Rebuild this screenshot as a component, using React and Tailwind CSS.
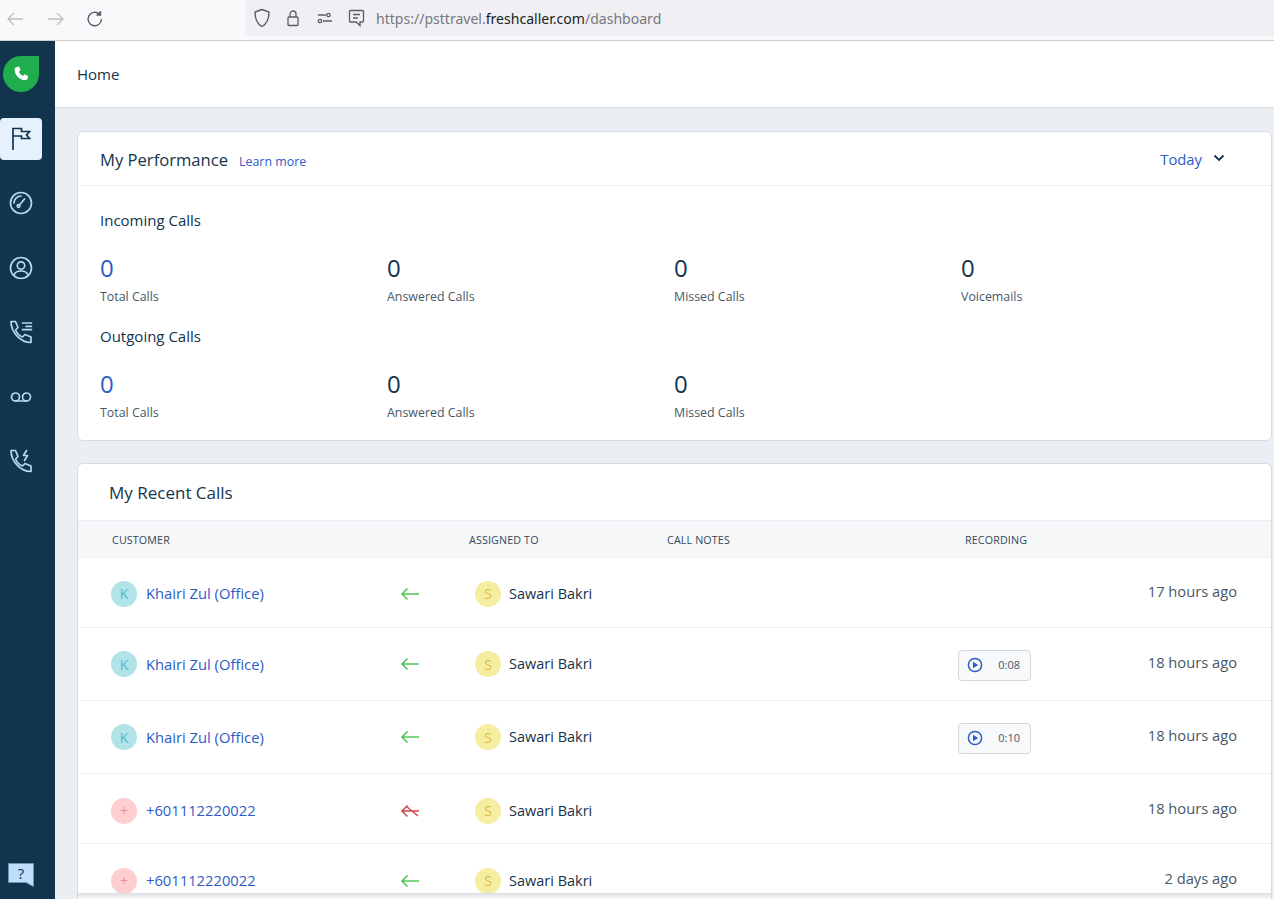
import React from "react";

const Arrow = ({ missed }) =>
  missed ? (
    <svg width="20" height="14" viewBox="0 0 20 14" fill="none" stroke="#d0484f" strokeWidth="1.5">
      <path d="M19 7H2M7.5 1.5 2 7l5.5 5.5M6 2l12 10" />
    </svg>
  ) : (
    <svg width="20" height="14" viewBox="0 0 20 14" fill="none" stroke="#57c35a" strokeWidth="1.6">
      <path d="M19 7H2M7.5 1.5 2 7l5.5 5.5" />
    </svg>
  );

const Play = () => (
  <svg width="16" height="16" viewBox="0 0 16 16" fill="none">
    <circle cx="8" cy="8" r="6.6" stroke="#2c5cc5" strokeWidth="1.5" />
    <path d="M6 4.8v6.4L11.2 8z" fill="#2c5cc5" />
  </svg>
);

const Stat = ({ value, label, blue }) => (
  <div>
    <div className={`text-[24px] leading-[32px] ${blue ? "text-[#2c5cc5]" : "text-[#12344d]"}`}>{value}</div>
    <div className="mt-[4px] text-[12.4px] leading-[18px] text-[#475867]">{label}</div>
  </div>
);

const rows = [
  { name: "Khairi Zul (Office)", letter: "K", h: "h-[70px] pt-[2px]", time: "17 hours ago" },
  { name: "Khairi Zul (Office)", letter: "K", h: "h-[73px]", time: "18 hours ago", rec: "0:08" },
  { name: "Khairi Zul (Office)", letter: "K", h: "h-[73px]", time: "18 hours ago", rec: "0:10" },
  { name: "+601112220022", letter: "+", h: "h-[70px] pt-[4px]", time: "18 hours ago", missed: true },
  { name: "+601112220022", letter: "+", h: "h-[70px] pt-[4px]", time: "2 days ago" },
];

const avatarColor = {
  K: "bg-[#b1e4e9] text-[#5cb8c4]",
  "+": "bg-[#ffcfcf] text-[#ef8f8f]",
};

const NavIcon = ({ children, active }) => (
  <div className={`flex h-[42px] w-[42px] items-center justify-center rounded-[4px] ${active ? "bg-[#e5f2fd]" : ""}`}>
    {children}
  </div>
);

const stroke = { fill: "none", stroke: "#b5d9f3", strokeWidth: 1.7, strokeLinecap: "round", strokeLinejoin: "round" };
const phone = "M2 1.500h4.500l2.500 6-2.500 2.500c1.500 3.500 3.500 5.500 7 7l2.500-2.500 6 2.500v5.500C11 22.500 2 12 2 1.500z";

export default function App() {
  return (
    <div className="flex h-[899px] flex-col overflow-hidden bg-[#ebeff3] font-['Open_Sans',sans-serif] text-[#12344d]">
      {/* browser bar */}
      <div className="flex h-[41px] shrink-0 items-start border-b border-[#cfcfd1] bg-[#f9f9fb]">
        <div className="flex h-[38px] w-[245px] shrink-0 items-center gap-[21px] pl-[6px]">
          <svg width="19" height="16" viewBox="0 0 19 16" fill="none" stroke="#bdbdc1" strokeWidth="1.3"><path d="M17 8H2M8 2 2 8l6 6" /></svg>
          <svg width="19" height="16" viewBox="0 0 19 16" fill="none" stroke="#bdbdc1" strokeWidth="1.3"><path d="M2 8h15M11 2l6 6-6 6" /></svg>
          <svg className="-ml-[1px]" width="20" height="20" viewBox="0 0 20 20" fill="none" stroke="#5b5b66" strokeWidth="1.4"><path d="M16.5 10a6.7 6.7 0 1 1-2.2-5" /><path d="M15.5 2v4h-4" fill="#5b5b66" /></svg>
        </div>
        <div className="flex h-[36px] flex-1 items-center rounded-l-[5px] bg-[#f0f0f4] pl-[8px]">
          <svg width="18" height="20" viewBox="0 0 18 20" fill="none" stroke="#5b5b66" strokeWidth="1.4"><path d="M9 1.5 2 4c0 7 1.5 11.500 7 14.500C14.500 15.500 16 11 16 4z" /></svg>
          <svg className="ml-[15px]" width="14" height="18" viewBox="0 0 14 18" fill="none" stroke="#5b5b66" strokeWidth="1.3"><rect x="2" y="8" width="10" height="8.500" rx="1" /><path d="M4 8V5a3 3 0 0 1 6 0v3" /></svg>
          <svg className="ml-[17px]" width="16" height="12" viewBox="0 0 16 12" fill="none" stroke="#5b5b66" strokeWidth="1.3"><circle cx="11.500" cy="3" r="1.700" /><circle cx="3" cy="9" r="1.700" /><path d="M1 3h8M6 9h9" /></svg>
          <svg className="ml-[15px]" width="17" height="18" viewBox="0 0 17 18" fill="none" stroke="#5b5b66" strokeWidth="1.3"><path d="M2.500 1.500h12a1 1 0 0 1 1 1V12a1 1 0 0 1-1 1H12v3.500L8 13H2.500a1 1 0 0 1-1-1V2.500a1 1 0 0 1 1-1zM5 5.500h7M5 9h5" /></svg>
          <div className="ml-[11px] mt-[2px] font-['Noto_Sans',sans-serif] text-[14.05px] text-[#78787f]">
            https://psttravel.<span className="text-[#1d1d22]">freshcaller.com</span>/dashboard
          </div>
        </div>
      </div>

      <div className="flex min-h-0 flex-1">
        {/* sidebar */}
        <aside className="flex w-[55px] shrink-0 flex-col items-center bg-[#12344d] pb-[12px]">
          <div className="mt-[15px] mr-[12px] ml-[-1px] flex h-[36px] w-[36px] items-center justify-center rounded-full rounded-tr-[8px] bg-[#1fad4e]">
            <svg width="18" height="18" viewBox="0 0 24 24" fill="#fff"><path d="M6.600 2.500 9.500 2l2 5-2.200 2c.8 2.500 2.500 4.300 5.200 5.500l2-2.200 5 2.200-.5 3c-.3 1.500-1.500 2.500-3 2.500C10 20 3.500 13.500 3.500 5.500c0-1.500 1.500-2.700 3.100-3z" /></svg>
          </div>
          <div className="mt-[26px] flex w-full flex-col">
            <NavIcon active>
              <svg width="22" height="24" viewBox="0 0 22 24" fill="none" stroke="#12344d" strokeWidth="1.700"><path d="M3 23V1.500h8.500V4.500h8L16.500 8l3 3.500H11.500V9H3" /></svg>
            </NavIcon>
            <div className="mt-[22px] flex flex-col gap-[22.5px]">
              <NavIcon>
                <svg width="24" height="24" viewBox="0 0 24 24" {...stroke}><circle cx="12" cy="12" r="10.500" /><circle cx="9.500" cy="15" r="1.300" /><path d="m10.500 14 5-6M5 12a7 7 0 0 1 7-7" /></svg>
              </NavIcon>
              <NavIcon>
                <svg width="24" height="24" viewBox="0 0 24 24" {...stroke}><circle cx="12" cy="12" r="10.500" /><circle cx="12" cy="9.500" r="3.700" /><path d="M5 19c1-3 3.500-4 7-4s6 1 7 4" /></svg>
              </NavIcon>
              <NavIcon>
                <svg width="24" height="24" viewBox="0 0 24 24" {...stroke}><path d={phone} /><path d="M13.500 3h9M17 6.300h5.500M13.500 9.600h9" /></svg>
              </NavIcon>
              <NavIcon>
                <svg width="22" height="12" viewBox="0 0 22 12" {...stroke}><circle cx="5.500" cy="6" r="4" /><circle cx="16.500" cy="6" r="4" /><path d="M5.500 10h11" /></svg>
              </NavIcon>
              <NavIcon>
                <svg width="24" height="24" viewBox="0 0 24 24" {...stroke}><path d={phone} /><path d="M17.500 1.500l-3 5h4l-3 5" /></svg>
              </NavIcon>
            </div>
          </div>
          <div className="relative mt-auto mr-[13px] h-[24px] w-[26px]">
            <svg width="26" height="24" viewBox="0 0 26 24">
              <path d="M.5.500h25v23l-7.500-4H.5z" fill="#bfdffc" stroke="#6f93b3" />
            </svg>
            <span className="absolute inset-x-0 top-0 text-center text-[15px] leading-[20px] text-[#12344d]">?</span>
          </div>
        </aside>

        <main className="flex min-w-0 flex-1 flex-col">
          <header className="flex h-[67px] shrink-0 items-center border-b border-[#dadfe3] bg-white pl-[22px] text-[15px]">
            Home
          </header>

          <div className="flex min-h-0 flex-1 flex-col overflow-hidden pl-[22px] pr-[2px] pt-[23px]">
            {/* performance */}
            <section className="h-[310px] shrink-0 rounded-[6px] border border-[#d6dce3] bg-white">
              <div className="flex h-[54px] items-center border-b border-[#ebeff3] pl-[22px] pr-[46px] pt-[3px]">
                <h2 className="text-[16.6px]">My Performance</h2>
                <a className="ml-[11px] mt-[5px] text-[12.4px] text-[#2c5cc5]">Learn more</a>
                <div className="ml-auto -mt-[2px] flex items-center gap-[11px] text-[14.8px] text-[#2c5cc5]">
                  Today
                  <svg className="-mt-[2px]" width="12" height="8" viewBox="0 0 12 8" fill="none" stroke="#12344d" strokeWidth="1.800"><path d="m1.500 1.500 4.500 4.500 4.500-4.500" /></svg>
                </div>
              </div>
              <div className="pl-[22px] pt-[23px]">
                <h3 className="text-[15px] leading-[22px]">Incoming Calls</h3>
                <div className="mt-[21px] grid grid-cols-[287px_287px_287px_287px]">
                  <Stat value="0" label="Total Calls" blue />
                  <Stat value="0" label="Answered Calls" />
                  <Stat value="0" label="Missed Calls" />
                  <Stat value="0" label="Voicemails" />
                </div>
                <h3 className="mt-[19px] text-[15px] leading-[22px]">Outgoing Calls</h3>
                <div className="mt-[21px] grid grid-cols-[287px_287px_287px_287px]">
                  <Stat value="0" label="Total Calls" blue />
                  <Stat value="0" label="Answered Calls" />
                  <Stat value="0" label="Missed Calls" />
                </div>
              </div>
            </section>

            {/* recent calls */}
            <section className="relative mt-[22px] min-h-0 flex-1 overflow-hidden rounded-t-[6px] border border-b-0 border-[#d6dce3] bg-white">
              <div className="flex h-[56px] items-center pl-[31px] pt-[2px] text-[17px]">My Recent Calls</div>
              <div className="grid h-[38px] grid-cols-[357px_198px_298px_1fr] items-center border-y border-[#ebeff3] bg-[#f5f7f9] pl-[34px] pt-[2px] text-[10.7px] tracking-[0.15px] text-[#32485a]">
                <div>CUSTOMER</div>
                <div>ASSIGNED TO</div>
                <div>CALL NOTES</div>
                <div>RECORDING</div>
              </div>
              {rows.map((row, i) => (
                <div key={i} className={`flex shrink-0 items-center border-b border-[#ebeff3] pl-[33px] pr-[34px] ${row.h}`}>
                  <div className={`flex h-[26px] w-[26px] shrink-0 items-center justify-center rounded-full text-[14px] ${avatarColor[row.letter]}`}>
                    {row.letter}
                  </div>
                  <a className="ml-[9px] w-[254px] shrink-0 text-[14.75px] text-[#2c5cc5]">{row.name}</a>
                  <div className="w-[75px] shrink-0"><Arrow missed={row.missed} /></div>
                  <div className="flex h-[26px] w-[26px] shrink-0 items-center justify-center rounded-full bg-[#f5eea0] text-[14px] text-[#dcbc3e]">S</div>
                  <div className="ml-[8px] w-[449px] shrink-0 text-[14.5px] text-[#183247]">Sawari Bakri</div>
                  <div className="w-[73px] shrink-0">
                    {row.rec && (
                      <div className="mt-[2px] flex h-[31px] w-[73px] items-center justify-between rounded-[4px] border border-[#cfd7df] bg-[#f7f9fa] pl-[8px] pr-[10px] text-[11px] text-[#475867]">
                        <Play />
                        {row.rec}
                      </div>
                    )}
                  </div>
                  <div className="ml-auto -mt-[4px] text-[14.7px] text-[#475867]">{row.time}</div>
                </div>
              ))}
              <div className="absolute inset-x-0 bottom-0 h-[6px] bg-gradient-to-b from-[#dcdee0] to-[#fafafa]" />
            </section>
          </div>
        </main>
      </div>
    </div>
  );
}
